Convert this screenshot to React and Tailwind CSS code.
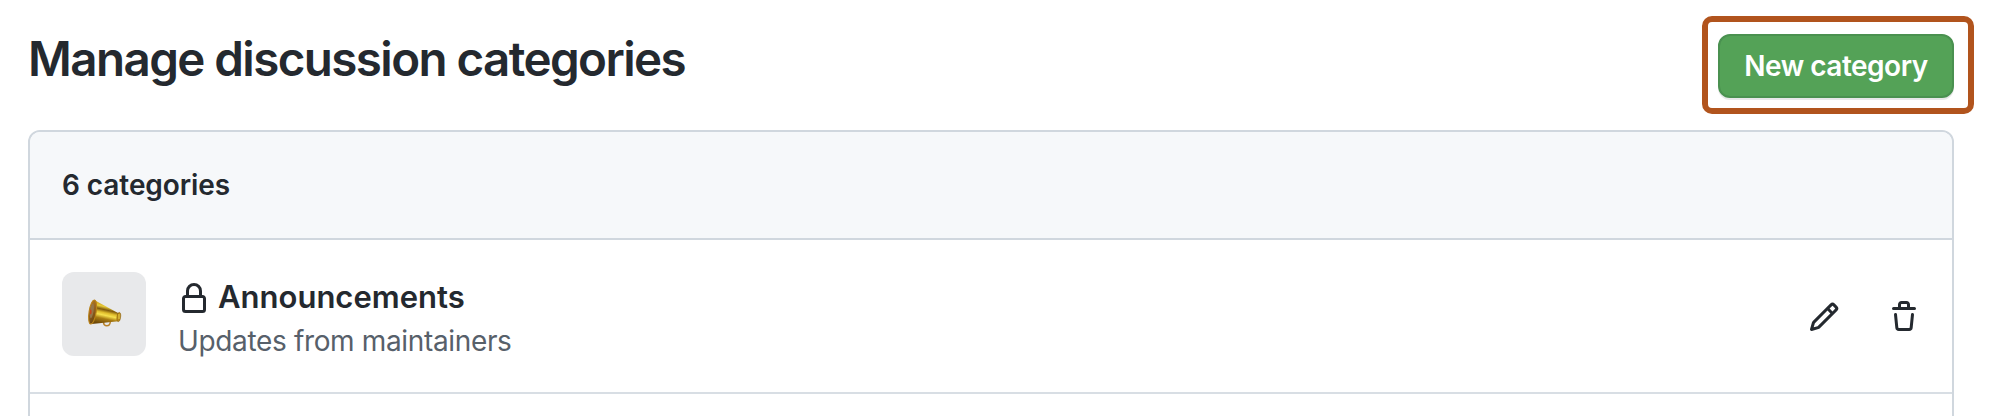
function Octicon({ d, className = "" }) {
  return (
    <svg viewBox="0 0 16 16" className={`block size-8 shrink-0 fill-[#24292f] ${className}`} aria-hidden="true">
      <path d={d} />
    </svg>
  );
}

const LOCK =
  "M4 4a4 4 0 0 1 8 0v2h.25c.966 0 1.75.784 1.75 1.75v5.5A1.75 1.75 0 0 1 12.25 15h-8.5A1.75 1.75 0 0 1 2 13.25v-5.5C2 6.784 2.784 6 3.75 6H4Zm8.25 3.5h-8.5a.25.25 0 0 0-.25.25v5.5c0 .138.112.25.25.25h8.5a.25.25 0 0 0 .25-.25v-5.5a.25.25 0 0 0-.25-.25ZM10.5 6V4a2.5 2.5 0 1 0-5 0v2Z";
const PENCIL =
  "M11.013 1.427a1.75 1.75 0 0 1 2.474 0l1.086 1.086a1.75 1.75 0 0 1 0 2.474l-8.61 8.61c-.21.21-.47.364-.756.445l-3.251.93a.75.75 0 0 1-.927-.928l.929-3.25c.081-.286.235-.547.445-.758l8.61-8.61Zm.176 4.823L9.75 4.81l-6.286 6.287a.253.253 0 0 0-.064.108l-.558 1.953 1.953-.558a.253.253 0 0 0 .108-.064Zm1.238-3.763a.25.25 0 0 0-.354 0L10.811 3.75l1.439 1.44 1.263-1.263a.25.25 0 0 0 0-.354Z";
const TRASH =
  "M11 1.75V3h2.25a.75.75 0 0 1 0 1.5H2.75a.75.75 0 0 1 0-1.5H5V1.75C5 .784 5.784 0 6.75 0h2.5C10.216 0 11 .784 11 1.75ZM4.496 6.675l.66 6.6a.25.25 0 0 0 .249.225h5.19a.25.25 0 0 0 .249-.225l.66-6.6a.75.75 0 0 1 1.492.149l-.66 6.6A1.748 1.748 0 0 1 10.595 15h-5.19a1.75 1.75 0 0 1-1.741-1.575l-.66-6.6a.75.75 0 1 1 1.492-.15ZM6.5 1.75V3h3V1.75a.25.25 0 0 0-.25-.25h-2.5a.25.25 0 0 0-.25.25Z";

function Megaphone() {
  return (
    <svg viewBox="1 1 36 30" className="block h-[30px] w-9" aria-hidden="true">
      <defs>
        <linearGradient id="horn" x1="0.65" y1="0" x2="0.4" y2="1">
          <stop offset="0" stopColor="#6b4a08" />
          <stop offset="0.16" stopColor="#d0a41c" />
          <stop offset="0.3" stopColor="#e6cb3a" />
          <stop offset="0.42" stopColor="#80590c" />
          <stop offset="0.54" stopColor="#e0bd2c" />
          <stop offset="0.64" stopColor="#f6e04e" />
          <stop offset="0.78" stopColor="#a97c12" />
          <stop offset="1" stopColor="#6e4807" />
        </linearGradient>
        <linearGradient id="bell" x1="0" y1="0" x2="0.4" y2="1">
          <stop offset="0" stopColor="#b07a1a" />
          <stop offset="0.45" stopColor="#9a6420" />
          <stop offset="1" stopColor="#704a12" />
        </linearGradient>
      </defs>
      <path d="M18.600 23.200c-.3 3.400 1.200 4.500 3.200 4.500s3.700-1.300 3.500-4.600" fill="none" stroke="#b8822a" strokeWidth="1.500" />
      <path d="M9.200 2.100 34 15.400l-.7 7.800L7 26Z" fill="url(#horn)" />
      <ellipse cx="7.600" cy="14" rx="3.500" ry="12.200" transform="rotate(9 7.600 14)" fill="url(#bell)" stroke="#b98218" strokeWidth="1.100" />
      <ellipse cx="6.900" cy="12.800" rx="1.700" ry="7.500" transform="rotate(9 6.900 12.800)" fill="#94764a" />
      <ellipse cx="5.700" cy="14" rx="0.900" ry="2.400" fill="#c8451a" />
      <ellipse cx="33.800" cy="19" rx="1.800" ry="4.600" transform="rotate(7 33.800 19)" fill="#b98b18" stroke="#8d5f0c" strokeWidth="0.600" />
      <path d="M34 16v5" stroke="#ecd04a" strokeWidth="1" />
    </svg>
  );
}

export default function App() {
  return (
    <main className="h-[416px] w-[1998px] overflow-hidden bg-white pl-7 pr-6 pt-4 font-['Inter','Liberation_Sans',sans-serif] text-[#24292f]">
      <header className="flex h-[98px] justify-between">
        <h1 className="pt-[13px] text-[47.5px] leading-[60px] font-semibold tracking-[-1.57px] whitespace-nowrap">
          Manage discussion categories
        </h1>
        <div className="h-[98px] w-[272px] rounded-[10px] border-[6px] border-[#b1541d] pl-2.5 pt-3">
          <button className="flex h-16 w-[236px] items-center justify-center rounded-xl border-2 border-[#4a9150] bg-[#54a257] text-[28px] leading-10 font-semibold tracking-[-0.5px] whitespace-nowrap text-white shadow-[0_2px_0_rgba(27,31,36,0.1)]">
            New category
          </button>
        </div>
      </header>

      <section className="mt-4 mr-5 h-[320px] rounded-t-xl border-2 border-[#d0d7de]">
        <div className="flex h-[108px] items-center rounded-t-[10px] border-b-2 border-[#d0d7de] bg-[#f6f8fa] px-8">
          <h2 className="text-[28px] leading-10 font-semibold tracking-[-0.07px]">6 categories</h2>
        </div>
        <div className="flex h-[154px] border-b-2 border-[#d8dee4] pl-8 pr-8 pt-8">
          <div className="flex size-[84px] shrink-0 items-center justify-center rounded-xl bg-[#e8e9eb]">
            <Megaphone />
          </div>
          <div className="ml-8 flex-1">
            <div className="flex h-[49px] items-center">
              <Octicon d={LOCK} className="mt-[5px]" />
              <h3 className="ml-2 text-[31px] leading-[48px] font-semibold tracking-[0.01px]">Announcements</h3>
            </div>
            <p className="text-[28px] leading-10 tracking-[-0.35px] text-[#57606a]">Updates from maintainers</p>
          </div>
          <div className="flex gap-12 pt-[29px]">
            <Octicon d={PENCIL} />
            <Octicon d={TRASH} />
          </div>
        </div>
      </section>
    </main>
  );
}
